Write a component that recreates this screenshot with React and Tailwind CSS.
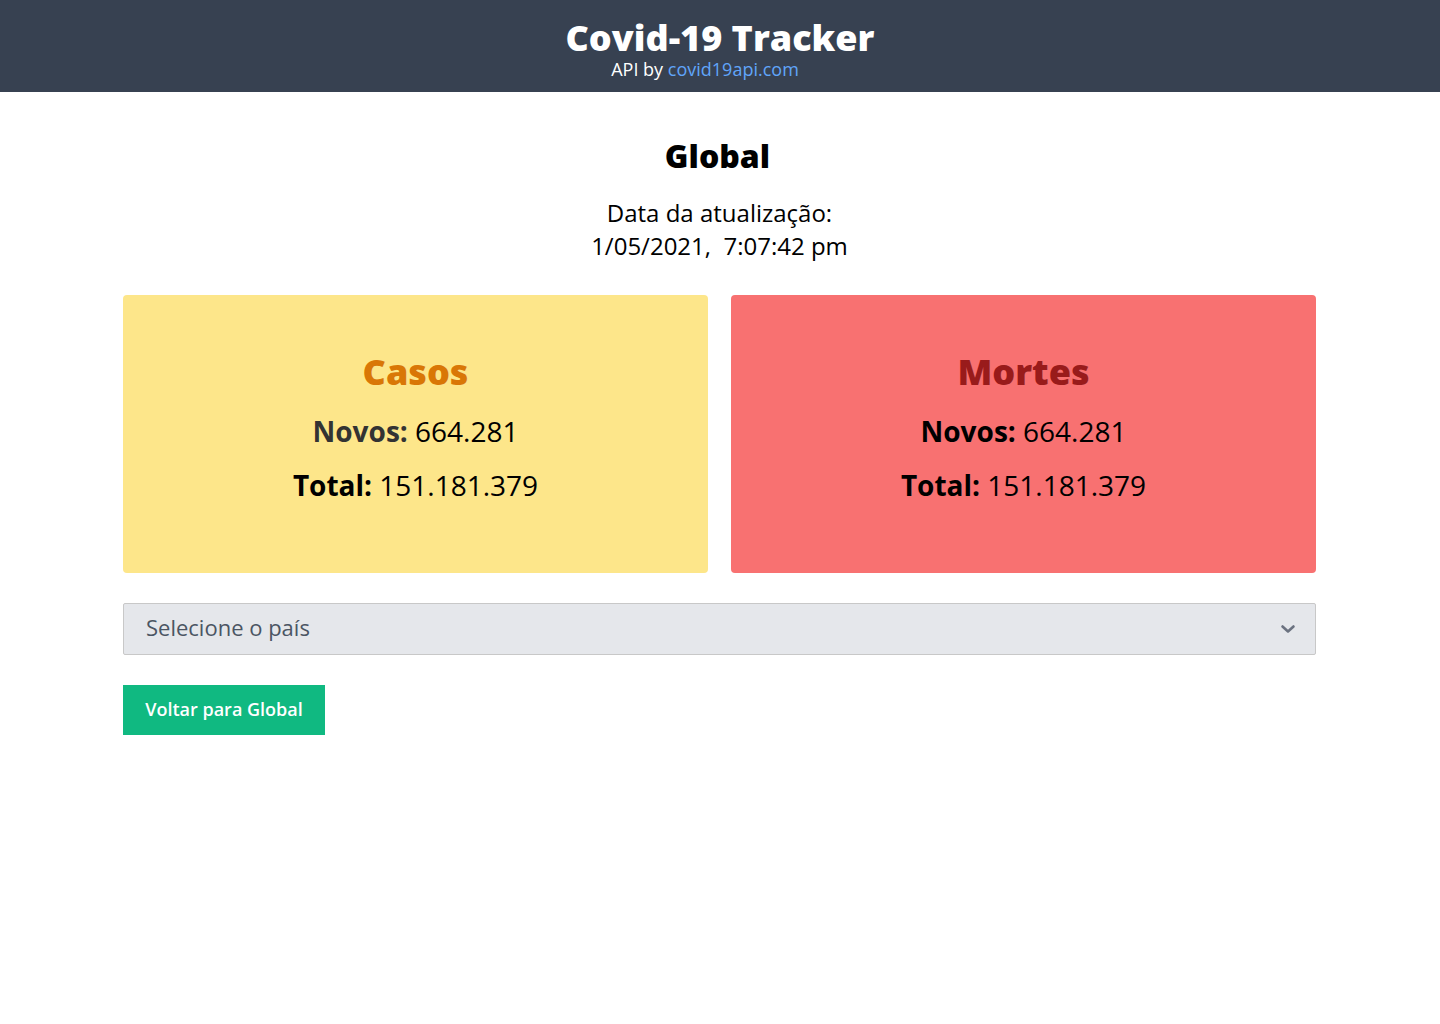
export default function App() {
  const font = { fontFamily: '"Open Sans", sans-serif' };
  return (
    <div className="min-h-screen bg-white" style={font}>
      <header className="bg-[#374151] h-[92px] flex flex-col items-center pt-[20px] text-white">
        <h1 className="text-4xl font-extrabold leading-[36px]">Covid-19 Tracker</h1>
        <p className="text-lg leading-[22px] mt-[2px] mr-[30px]">
          API by <a className="text-[#60a5fa]" href="#">covid19api.com</a>
        </p>
      </header>
      <main className="pl-[123px] pr-[124px] pt-[42px]">
        <h2 className="text-center text-[32px] font-extrabold leading-[44px] text-black pr-[4px]">Global</h2>
        <div className="text-center text-2xl leading-[33px] mt-[18px] text-black">
          <p>Data da atualização:</p>
          <p>1/05/2021,&nbsp; 7:07:42 pm</p>
        </div>
        <div className="grid grid-cols-2 gap-[23px] mt-[33px]">
          <div className="bg-[#fde68a] h-[278px] rounded-sm flex flex-col items-center pt-[52px]">
            <h3 className="text-4xl font-extrabold text-[#d97706] leading-[50px]">Casos</h3>
            <p className="text-[28px] mt-[14px] text-[#333] leading-[40px]"><span className="font-bold">Novos:</span> <span className="text-black">664.281</span></p>
            <p className="text-[28px] mt-[14px] text-black leading-[40px]"><span className="font-bold">Total:</span> 151.181.379</p>
          </div>
          <div className="bg-[#f87171] h-[278px] rounded-sm flex flex-col items-center pt-[52px]">
            <h3 className="text-4xl font-extrabold text-[#991b1b] leading-[50px]">Mortes</h3>
            <p className="text-[28px] mt-[14px] text-black leading-[40px]"><span className="font-bold">Novos:</span> 664.281</p>
            <p className="text-[28px] mt-[14px] text-black leading-[40px]"><span className="font-bold">Total:</span> 151.181.379</p>
          </div>
        </div>
        <div className="mt-[30px] h-[52px] bg-[#e5e7eb] border border-[#c8c8c8] rounded-[2px] flex items-center justify-between pl-[22px] pr-[19px]">
          <span className="text-[22px] text-[#4b5563] leading-[30px] mb-[4px]">Selecione o país</span>
          <svg width="16" height="10" viewBox="0 0 16 10" fill="none" stroke="#6b7280" strokeWidth="2.6" strokeLinecap="round" strokeLinejoin="round"><path d="M2.5 2.5 L8 7.5 L13.5 2.5"/></svg>
        </div>
        <button className="mt-[30px] h-[50px] w-[202px] bg-[#10b981] text-white text-lg font-semibold pb-[2px]">Voltar para Global</button>
      </main>
    </div>
  );
}
